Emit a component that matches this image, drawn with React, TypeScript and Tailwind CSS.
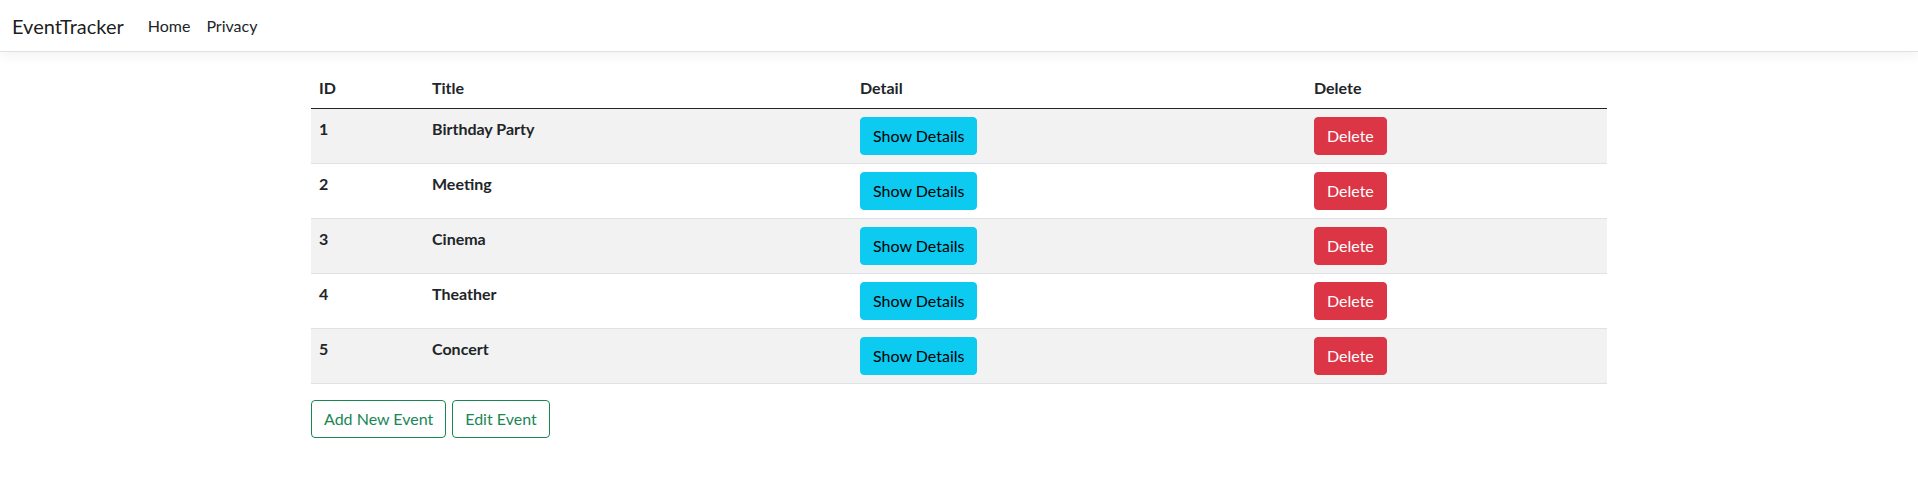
const events = [
  { id: 1, title: "Birthday Party" },
  { id: 2, title: "Meeting" },
  { id: 3, title: "Cinema" },
  { id: 4, title: "Theather" },
  { id: 5, title: "Concert" },
];

const App = () => {
  return (
    <div className="min-h-screen bg-white text-[16px] leading-6 text-[#212529] font-['Segoe_UI','Lato','Noto_Sans',sans-serif]">
      <header className="mb-[16px] border-b border-[#dee2e6] bg-white shadow-[0_0.25rem_0.75rem_rgba(0,0,0,0.05)]">
        <nav className="flex h-[51px] items-center px-3">
          <a className="mr-4 text-[20px] leading-[30px] text-black/90" href="#">
            EventTracker
          </a>
          <div className="flex">
            <a className="px-2 text-[#212529]" href="#">
              Home
            </a>
            <a className="px-2 text-[#212529]" href="#">
              Privacy
            </a>
          </div>
        </nav>
      </header>

      <main className="mx-auto w-[1320px] px-3">
        <table className="mb-4 w-full border-collapse text-left">
          <thead>
            <tr className="border-b border-[#212529]">
              <th className="w-[113px] p-2 font-bold">ID</th>
              <th className="w-[428px] p-2 font-bold">Title</th>
              <th className="w-[454px] p-2 font-bold">Detail</th>
              <th className="p-2 font-bold">Delete</th>
            </tr>
          </thead>
          <tbody>
            {events.map((ev, idx) => (
              <tr
                key={ev.id}
                className={`border-b border-[#dee2e6] ${idx % 2 === 0 ? "bg-[#f2f2f2]" : "bg-white"}`}
              >
                <td className="p-2 align-top font-bold">{ev.id}</td>
                <td className="p-2 align-top font-bold">{ev.title}</td>
                <td className="p-2 align-top">
                  <button className="rounded-[4px] border border-[#0dcaf0] bg-[#0dcaf0] px-3 py-1.5 text-black">
                    Show Details
                  </button>
                </td>
                <td className="p-2 align-top">
                  <button className="rounded-[4px] border border-[#dc3545] bg-[#dc3545] px-3 py-1.5 text-white">
                    Delete
                  </button>
                </td>
              </tr>
            ))}
          </tbody>
        </table>

        <div className="flex gap-[6px]">
          <button className="rounded-[4px] border border-[#198754] bg-white px-3 py-1.5 text-[#198754]">
            Add New Event
          </button>
          <button className="rounded-[4px] border border-[#198754] bg-white px-3 py-1.5 text-[#198754]">
            Edit Event
          </button>
        </div>
      </main>
    </div>
  );
};

export default App;
